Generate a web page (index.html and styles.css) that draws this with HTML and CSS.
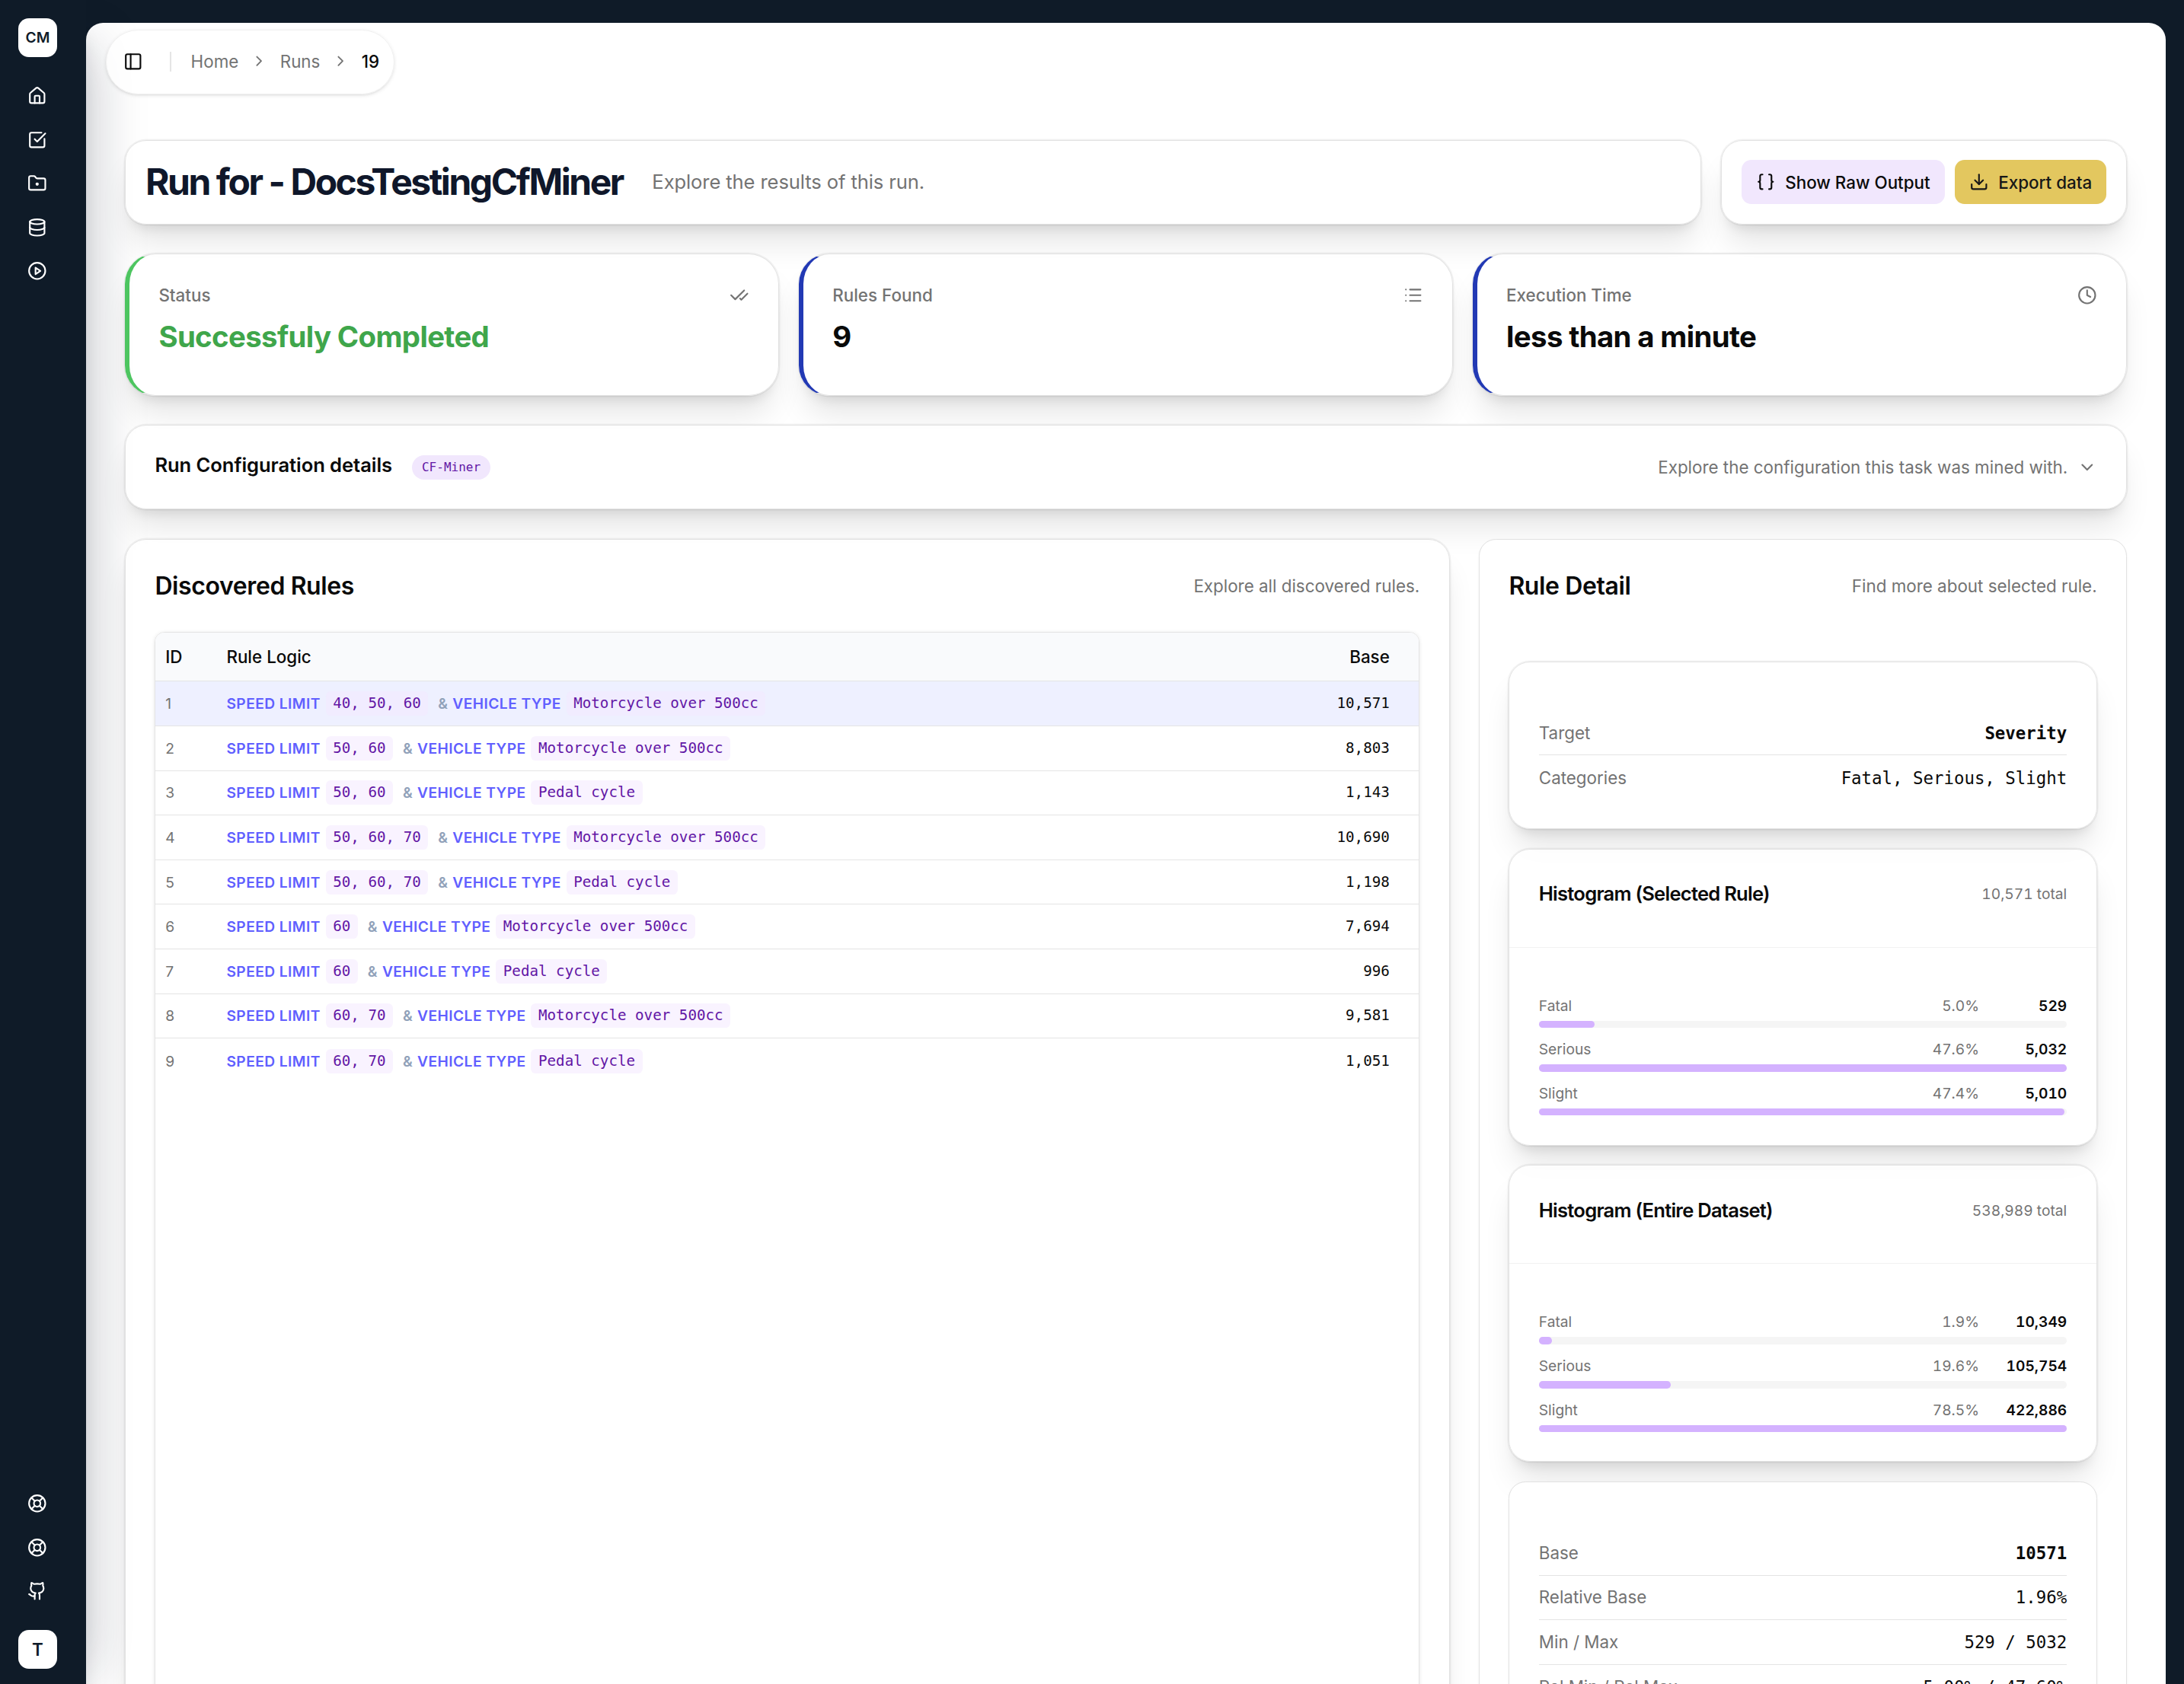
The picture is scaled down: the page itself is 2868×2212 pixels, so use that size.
FILE: index.html
```html
<!DOCTYPE html>
<html lang="en">
<head>
    <meta charset="UTF-8">
    <meta name="viewport" content="width=device-width, initial-scale=1.0">
    <title>Run 19</title>
    <link rel="stylesheet" href="styles.css">
</head>
<body>
    <!-- Sidebar -->
    <aside class="sidebar">
        <div class="logo">CM</div>
        <nav class="side-nav">
            <svg class="icon" viewBox="0 0 24 24"><path d="M15 21v-8a1 1 0 0 0-1-1h-4a1 1 0 0 0-1 1v8"/><path d="M3 10a2 2 0 0 1 .709-1.528l7-6a2 2 0 0 1 2.582 0l7 6A2 2 0 0 1 21 10v9a2 2 0 0 1-2 2H5a2 2 0 0 1-2-2z"/></svg>
            <svg class="icon" viewBox="0 0 24 24"><path d="M21 10.656V19a2 2 0 0 1-2 2H5a2 2 0 0 1-2-2V5a2 2 0 0 1 2-2h12.344"/><path d="m9 11 3 3L22 4"/></svg>
            <svg class="icon" viewBox="0 0 24 24"><path d="M4 20h16a2 2 0 0 0 2-2V8a2 2 0 0 0-2-2h-7.93a2 2 0 0 1-1.66-.9l-.82-1.2A2 2 0 0 0 7.93 3H4a2 2 0 0 0-2 2v13c0 1.1.9 2 2 2Z"/><circle cx="12" cy="13" r="1"/></svg>
            <svg class="icon" viewBox="0 0 24 24"><ellipse cx="12" cy="5" rx="9" ry="3"/><path d="M3 5v14a9 3 0 0 0 18 0V5"/><path d="M3 12a9 3 0 0 0 18 0"/></svg>
            <svg class="icon" viewBox="0 0 24 24"><circle cx="12" cy="12" r="10"/><path d="M10 8l6 4-6 4z"/></svg>
        </nav>
        <nav class="side-nav side-bottom">
            <svg class="icon" viewBox="0 0 24 24"><circle cx="12" cy="12" r="10"/><path d="m4.93 4.93 4.24 4.24m5.66 0 4.24-4.24m-4.24 9.9 4.24 4.24m-9.9-4.24-4.24 4.24"/><circle cx="12" cy="12" r="4"/></svg>
            <svg class="icon" viewBox="0 0 24 24"><circle cx="12" cy="12" r="10"/><path d="m4.93 4.93 4.24 4.24m5.66 0 4.24-4.24m-4.24 9.9 4.24 4.24m-9.9-4.24-4.24 4.24"/><circle cx="12" cy="12" r="4"/></svg>
            <svg class="icon" viewBox="0 0 24 24"><path d="M15 22v-4a4.800 4.800 0 0 0-1-3.500c3 0 6-2 6-5.500.08-1.250-.27-2.480-1-3.500.28-1.150.28-2.350 0-3.500 0 0-1 0-3 1.500-2.640-.5-5.360-.5-8 0C6 2 5 2 5 2c-.3 1.150-.3 2.350 0 3.500A5.403 5.403 0 0 0 4 9c0 3.500 3 5.500 6 5.500-.39.49-.68 1.050-.85 1.650-.17.6-.22 1.230-.15 1.850v4"/><path d="M9 18c-4.510 2-5-2-7-2"/></svg>
        </nav>
        <div class="logo avatar">T</div>
    </aside>

    <!-- Main panel -->
    <main class="panel">
        <div class="breadcrumb">
            <svg class="icon toggle" viewBox="0 0 24 24"><rect x="3" y="3" width="18" height="18" rx="2"/><path d="M9 3v18"/></svg>
            <span class="separator"></span>
            <span>Home</span>
            <svg class="icon chevron" viewBox="0 0 24 24"><path d="m9 18 6-6-6-6"/></svg>
            <span>Runs</span>
            <svg class="icon chevron" viewBox="0 0 24 24"><path d="m9 18 6-6-6-6"/></svg>
            <span class="current">19</span>
        </div>

        <div class="content">
            <!-- Title and actions -->
            <div class="title-row">
                <div class="card title-card">
                    <h1>Run for - DocsTestingCfMiner</h1>
                    <p>Explore the results of this run.</p>
                </div>
                <div class="card action-card">
                    <button class="button raw">
                        <svg class="icon" viewBox="0 0 24 24"><path d="M8 3H7a2 2 0 0 0-2 2v5a2 2 0 0 1-2 2 2 2 0 0 1 2 2v5c0 1.100.9 2 2 2h1"/><path d="M16 21h1a2 2 0 0 0 2-2v-5c0-1.100.9-2 2-2a2 2 0 0 1-2-2V5a2 2 0 0 0-2-2h-1"/></svg>
                        Show Raw Output
                    </button>
                    <button class="button export">
                        <svg class="icon" viewBox="0 0 24 24"><path d="M12 15V3"/><path d="M21 15v4a2 2 0 0 1-2 2H5a2 2 0 0 1-2-2v-4"/><path d="m7 10 5 5 5-5"/></svg>
                        Export data
                    </button>
                </div>
            </div>

            <!-- Stats -->
            <div class="stats">
                <div class="card stat success">
                    <div class="stat-head">Status
                        <svg class="icon" viewBox="0 0 24 24"><path d="M18 6 7 17l-5-5"/><path d="m22 10-7.500 7.500L13 16"/></svg>
                    </div>
                    <div class="stat-value">Successfuly Completed</div>
                </div>
                <div class="card stat">
                    <div class="stat-head">Rules Found
                        <svg class="icon" viewBox="0 0 24 24"><path d="M3 5h.01M3 12h.01M3 19h.01M8 5h13M8 12h13M8 19h13"/></svg>
                    </div>
                    <div class="stat-value">9</div>
                </div>
                <div class="card stat">
                    <div class="stat-head">Execution Time
                        <svg class="icon" viewBox="0 0 24 24"><circle cx="12" cy="12" r="10"/><path d="M12 6v6l4 2"/></svg>
                    </div>
                    <div class="stat-value">less than a minute</div>
                </div>
            </div>

            <!-- Run configuration -->
            <div class="card config">
                <h3>Run Configuration details</h3>
                <span class="badge">CF-Miner</span>
                <span class="config-text">Explore the configuration this task was mined with.</span>
                <svg class="icon" viewBox="0 0 24 24"><path d="m6 9 6 6 6-6"/></svg>
            </div>

            <div class="columns">
                <!-- Discovered rules -->
                <section class="card rules">
                    <div class="section-head">
                        <h2>Discovered Rules</h2>
                        <p>Explore all discovered rules.</p>
                    </div>
                    <div class="table-box">
                        <table>
                            <thead>
                                <tr><th class="id">ID</th><th>Rule Logic</th><th class="base">Base</th></tr>
                            </thead>
                            <tbody>
                                <tr class="selected"><td class="id">1</td><td><div class="rule"><b>SPEED LIMIT</b><code>40, 50, 60</code><i>&amp;</i><b>VEHICLE TYPE</b><code>Motorcycle over 500cc</code></div></td><td class="base">10,571</td></tr>
                                <tr><td class="id">2</td><td><div class="rule"><b>SPEED LIMIT</b><code>50, 60</code><i>&amp;</i><b>VEHICLE TYPE</b><code>Motorcycle over 500cc</code></div></td><td class="base">8,803</td></tr>
                                <tr><td class="id">3</td><td><div class="rule"><b>SPEED LIMIT</b><code>50, 60</code><i>&amp;</i><b>VEHICLE TYPE</b><code>Pedal cycle</code></div></td><td class="base">1,143</td></tr>
                                <tr><td class="id">4</td><td><div class="rule"><b>SPEED LIMIT</b><code>50, 60, 70</code><i>&amp;</i><b>VEHICLE TYPE</b><code>Motorcycle over 500cc</code></div></td><td class="base">10,690</td></tr>
                                <tr><td class="id">5</td><td><div class="rule"><b>SPEED LIMIT</b><code>50, 60, 70</code><i>&amp;</i><b>VEHICLE TYPE</b><code>Pedal cycle</code></div></td><td class="base">1,198</td></tr>
                                <tr><td class="id">6</td><td><div class="rule"><b>SPEED LIMIT</b><code>60</code><i>&amp;</i><b>VEHICLE TYPE</b><code>Motorcycle over 500cc</code></div></td><td class="base">7,694</td></tr>
                                <tr><td class="id">7</td><td><div class="rule"><b>SPEED LIMIT</b><code>60</code><i>&amp;</i><b>VEHICLE TYPE</b><code>Pedal cycle</code></div></td><td class="base">996</td></tr>
                                <tr><td class="id">8</td><td><div class="rule"><b>SPEED LIMIT</b><code>60, 70</code><i>&amp;</i><b>VEHICLE TYPE</b><code>Motorcycle over 500cc</code></div></td><td class="base">9,581</td></tr>
                                <tr><td class="id">9</td><td><div class="rule"><b>SPEED LIMIT</b><code>60, 70</code><i>&amp;</i><b>VEHICLE TYPE</b><code>Pedal cycle</code></div></td><td class="base">1,051</td></tr>
                            </tbody>
                        </table>
                    </div>
                </section>

                <!-- Rule detail -->
                <section class="card flat detail">
                    <div class="section-head">
                        <h2>Rule Detail</h2>
                        <p>Find more about selected rule.</p>
                    </div>
                    <div class="detail-list">
                        <div class="card facts">
                            <div class="fact"><span>Target</span><code class="strong">Severity</code></div>
                            <div class="fact"><span>Categories</span><code>Fatal, Serious, Slight</code></div>
                        </div>

                        <div class="card histogram">
                            <div class="histogram-head"><h3>Histogram (Selected Rule)</h3><span>10,571 total</span></div>
                            <div class="histogram-body">
                                <div class="bar-row">
                                    <div class="bar-label"><span>Fatal</span><span class="percent">5.0%</span><span class="count">529</span></div>
                                    <div class="track"><div class="fill" style="width: 10.51%"></div></div>
                                </div>
                                <div class="bar-row">
                                    <div class="bar-label"><span>Serious</span><span class="percent">47.6%</span><span class="count">5,032</span></div>
                                    <div class="track"><div class="fill" style="width: 100%"></div></div>
                                </div>
                                <div class="bar-row">
                                    <div class="bar-label"><span>Slight</span><span class="percent">47.4%</span><span class="count">5,010</span></div>
                                    <div class="track"><div class="fill" style="width: 99.56%"></div></div>
                                </div>
                            </div>
                        </div>

                        <div class="card histogram">
                            <div class="histogram-head"><h3>Histogram (Entire Dataset)</h3><span>538,989 total</span></div>
                            <div class="histogram-body">
                                <div class="bar-row">
                                    <div class="bar-label"><span>Fatal</span><span class="percent">1.9%</span><span class="count">10,349</span></div>
                                    <div class="track"><div class="fill" style="width: 2.45%"></div></div>
                                </div>
                                <div class="bar-row">
                                    <div class="bar-label"><span>Serious</span><span class="percent">19.6%</span><span class="count">105,754</span></div>
                                    <div class="track"><div class="fill" style="width: 25.01%"></div></div>
                                </div>
                                <div class="bar-row">
                                    <div class="bar-label"><span>Slight</span><span class="percent">78.5%</span><span class="count">422,886</span></div>
                                    <div class="track"><div class="fill" style="width: 100%"></div></div>
                                </div>
                            </div>
                        </div>

                        <div class="card flat facts">
                            <div class="fact"><span>Base</span><code class="strong">10571</code></div>
                            <div class="fact"><span>Relative Base</span><code>1.96%</code></div>
                            <div class="fact"><span>Min / Max</span><code>529 / 5032</code></div>
                            <div class="fact"><span>Rel Min / Rel Max</span><code>5.00% / 47.60%</code></div>
                        </div>
                    </div>
                </section>
            </div>
        </div>
    </main>
</body>
</html>
```
FILE: styles.css
```css
/* General Reset and Basic Styles */
* {
    margin: 0;
    padding: 0;
    box-sizing: border-box;
}

body {
    display: flex;
    height: 100vh;
    overflow: hidden;
    background-color: #0f1b28;
    color: #0a0a0a;
    font-family: Inter, "Liberation Sans", sans-serif;
    font-size: 22.4px;
    line-height: 32px;
}

code {
    font-family: "DejaVu Sans Mono", monospace;
}

.icon {
    width: 25.6px;
    height: 25.6px;
    flex-shrink: 0;
    fill: none;
    stroke: currentColor;
    stroke-width: 2;
    stroke-linecap: round;
    stroke-linejoin: round;
}

/* Sidebar */
.sidebar {
    position: relative;
    z-index: 1;
    width: 113px;
    flex-shrink: 0;
    padding: 24px 0 20px 24px;
    display: flex;
    flex-direction: column;
    background-color: #0f1b28;
    color: #fff;
    box-shadow: 42px 25px 70px -35px rgba(15, 23, 42, 0.28), 0 50px 20px rgba(15, 23, 42, 0.1);
}

.logo {
    width: 51px;
    height: 51px;
    border-radius: 14px;
    background-color: #fff;
    color: #0f1b28;
    font-size: 19.2px;
    font-weight: 600;
    line-height: 50px;
    text-align: center;
}

.avatar {
    font-size: 22.4px;
    line-height: 52px;
}

.side-nav {
    width: 50px;
    margin-top: 38px;
    display: flex;
    flex-direction: column;
    align-items: center;
    gap: 32px;
}

.side-bottom {
    margin-top: auto;
    margin-bottom: 38px;
}

/* Main panel */
.panel {
    flex: 1;
    height: 2300px;
    margin: 30px 24px 0 0;
    background-color: #fff;
    border-radius: 22.4px;
}

/* The sidebar shadow falls on the panel but under its content */
.breadcrumb,
.content {
    position: relative;
    z-index: 2;
}

.breadcrumb {
    width: 379px;
    height: 85px;
    margin: 9px 0 0 26px;
    padding-left: 22px;
    padding-bottom: 2px;
    display: inline-flex;
    align-items: center;
    gap: 16px;
    color: #737373;
    border: 1px solid #f0f0f0;
    border-radius: 43px;
    background-color: rgba(255, 255, 255, 0.8);
    box-shadow: 0 1.6px 4.8px rgba(0, 0, 0, 0.1), 0 1.6px 3.2px -1.6px rgba(0, 0, 0, 0.1);
}

.breadcrumb .toggle {
    color: #0a0a0a;
}

.breadcrumb .separator {
    width: 2px;
    height: 26px;
    margin: 0 10px 0 19px;
    background-color: #e5e5e5;
}

.breadcrumb .chevron {
    width: 22.4px;
    height: 22.4px;
}

.breadcrumb .current {
    color: #0a0a0a;
    font-weight: 500;
}

.content {
    padding: 59.5px 51px 0 51px;
    display: flex;
    flex-direction: column;
    gap: 38.4px;
}

/* Cards */
.card {
    border: 1px solid #e2e2e2;
    border-radius: 28px;
    background-color: rgba(255, 255, 255, 0.8);
    box-shadow: 0 0 0 1.5px rgba(0, 0, 0, 0.05), 0 32px 40px -8px rgba(0, 0, 0, 0.1), 0 12.8px 16px -9.6px rgba(0, 0, 0, 0.1);
}

.card.flat {
    border-radius: 22.4px;
    background-color: #fff;
    box-shadow: 0 1.6px 3.2px rgba(0, 0, 0, 0.05);
}

/* Title and actions */
.title-row {
    display: flex;
    gap: 25.6px;
    height: 111px;
}

.title-card {
    flex: 1;
    padding: 0 26px;
    display: flex;
    align-items: center;
    gap: 38.4px;
}

.title-card h1 {
    color: #0f172a;
    font-size: 48px;
    font-weight: 700;
    letter-spacing: -0.051em;
}

.title-card p {
    color: #737373;
    font-size: 25.6px;
    letter-spacing: -0.0045em;
}

.action-card {
    padding: 0 25.6px;
    display: flex;
    align-items: center;
    gap: 12.8px;
}

.button {
    height: 57.6px;
    padding: 0 19.2px;
    display: flex;
    align-items: center;
    gap: 12.8px;
    border: none;
    border-radius: 12.8px;
    color: #0a0a0a;
    font-family: inherit;
    font-size: 22.4px;
    font-weight: 500;
    white-space: nowrap;
}

.raw {
    background-color: #f1e7fd;
}

.export {
    background-color: #e3c75f;
    color: #171717;
}

/* Stats */
.stats {
    display: grid;
    grid-template-columns: repeat(3, 1fr);
    gap: 25.6px;
}

.stat {
    height: 187px;
    padding: 38.4px;
    border-left: 6px solid #2239b4;
    border-radius: 40px;
}

.stat.success {
    border-left-color: #4dc560;
}

.stat-head {
    display: flex;
    justify-content: space-between;
    align-items: center;
    color: #737373;
    font-weight: 500;
}

.stat-value {
    margin-top: 12.8px;
    font-size: 38.4px;
    font-weight: 700;
    letter-spacing: -0.017em;
    line-height: 51.2px;
}

.success .stat-value {
    color: #3fa64b;
}

/* Run configuration */
.config {
    height: 111px;
    padding: 0 38.4px;
    display: flex;
    align-items: center;
    color: #737373;
}

.config h3 {
    padding-bottom: 6.4px;
    color: #0a0a0a;
    font-size: 25.6px;
    font-weight: 600;
    letter-spacing: -0.003em;
}

.badge {
    height: 32px;
    margin-left: 26px;
    padding: 0 13px;
    border-radius: 16px;
    background-color: #f1e7fd;
    color: #6216a5;
    font-family: "DejaVu Sans Mono", monospace;
    font-size: 16px;
}

.config-text {
    margin-left: auto;
    margin-right: 12.8px;
}

/* Two columns */
.columns {
    display: grid;
    grid-template-columns: 1fr 851px;
    gap: 38.4px;
    align-items: start;
}

.rules,
.detail {
    height: 1700px;
    padding: 38.4px;
}

.section-head {
    height: 45px;
    display: flex;
    justify-content: space-between;
    align-items: center;
}

.section-head h2 {
    font-size: 32px;
    font-weight: 600;
    letter-spacing: -0.0125em;
}

.section-head p {
    color: #737373;
}

/* Rules table */
.table-box {
    height: 1500px;
    margin-top: 38.4px;
    overflow: hidden;
    border: 1px solid #e4e4e4;
    border-radius: 12.8px;
    box-shadow: 0 1.6px 4.8px rgba(0, 0, 0, 0.1);
}

table {
    width: 100%;
    border-collapse: separate;
    border-spacing: 0;
}

th {
    height: 64px;
    background-color: #f9fafc;
    font-weight: 500;
    text-align: left;
}

td {
    height: 58.6px;
}

th,
tr:not(:last-child) td {
    border-bottom: 1px solid #e4e4e4;
}

.id {
    width: 93px;
    padding-left: 12.8px;
}

td.id {
    color: #737373;
    font-size: 19.2px;
}

.base {
    width: 200px;
    padding-right: 38.4px;
    text-align: right;
}

td.base {
    font-family: "DejaVu Sans Mono", monospace;
    font-size: 19.2px;
}

.selected td {
    background-color: #eef0ff;
}

.rule {
    display: flex;
    align-items: center;
    font-size: 19.2px;
}

.rule b {
    color: #615fff;
    font-weight: 600;
    letter-spacing: 0.023em;
}

.rule code {
    height: 32px;
    margin-left: 6.8px;
    padding: 0 9.6px;
    border-radius: 6.4px;
    background-color: rgba(243, 232, 255, 0.5);
    color: #6216a5;
}

.rule i {
    margin: 0 6.4px 0 12.8px;
    color: #90a1b9;
    font-style: normal;
    font-weight: 600;
}

/* Rule detail */
.detail-list {
    margin-top: 76.8px;
    display: flex;
    flex-direction: column;
    gap: 25.6px;
}

.facts {
    padding: 64px 38.4px 37px;
}

.fact {
    height: 58.6px;
    display: flex;
    justify-content: space-between;
    align-items: center;
    color: #737373;
}

.fact:not(:last-child) {
    border-bottom: 1px solid #e4e4e4;
}

.fact code {
    color: #0a0a0a;
}

.fact .strong {
    font-weight: 700;
}

/* Histograms */
.histogram-head {
    height: 129px;
    padding: 38.4px 38.4px 0;
    display: flex;
    justify-content: space-between;
    align-items: flex-start;
    line-height: 40px;
    border-bottom: 1px solid #f2f2f2;
}

.histogram-head h3 {
    font-size: 25.6px;
    font-weight: 600;
    letter-spacing: -0.03em;
}

.histogram-head span {
    color: #737373;
    font-size: 19.2px;
    font-variant-numeric: tabular-nums;
}

.histogram-body {
    padding: 64px 38.4px 38.4px;
    display: flex;
    flex-direction: column;
    gap: 16px;
}

.bar-label {
    margin-bottom: 6.4px;
    display: flex;
    color: #737373;
    font-size: 19.2px;
    line-height: 25.6px;
    font-variant-numeric: tabular-nums;
}

.percent {
    margin-left: auto;
}

.count {
    width: 115.2px;
    color: #0a0a0a;
    font-weight: 600;
    text-align: right;
}

.track {
    height: 9.6px;
    border-radius: 4.8px;
    background-color: #f5f5f5;
}

.fill {
    height: 100%;
    border-radius: 4.8px;
    background-color: #d4b2ff;
}
```
